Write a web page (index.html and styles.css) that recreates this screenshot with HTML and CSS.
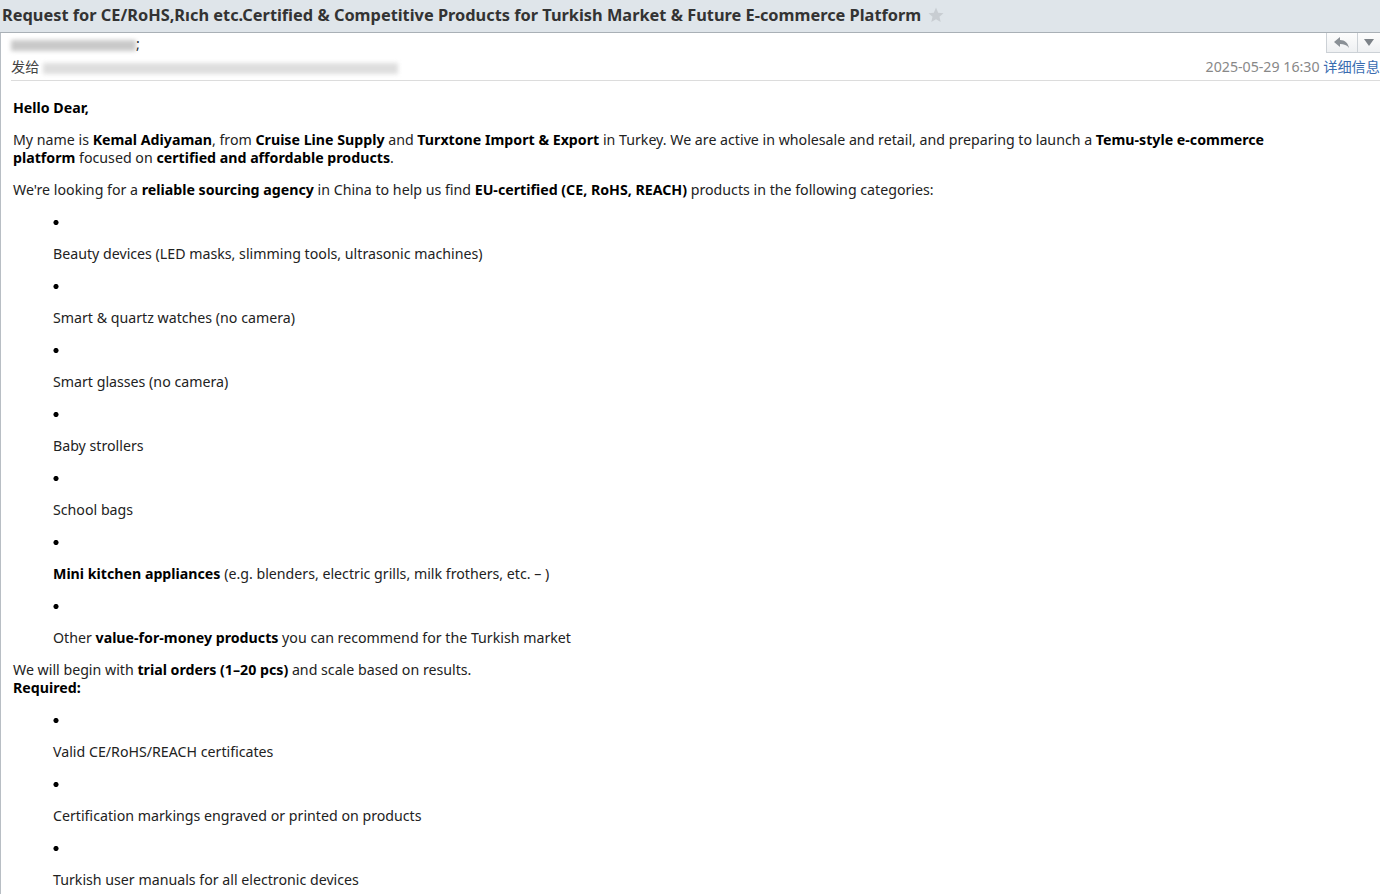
FILE: index.html
```html
<!DOCTYPE html>
<html lang="en">

<head>
    <meta charset="UTF-8">
    <title>Request for CE/RoHS</title>
    <link rel="stylesheet" href="styles.css">
</head>

<body>
    <div class="subject-bar">
        <h1 class="subject">Request for CE/RoHS,Rıch etc.Certified &amp; Competitive Products for Turkish Market &amp; Future E-commerce Platform</h1>
        <svg class="star" width="18" height="18" viewBox="0 0 24 24">
            <path d="M12 2l2.9 6.9 7.1.6-5.4 4.7 1.7 7.1L12 17.5 5.7 21.3l1.7-7.1L2 9.5l7.1-.6z" fill="#c8cdd2" />
        </svg>
    </div>

    <div class="mail">
        <div class="mail-head">
            <div class="head-row">
                <div class="sender"><span class="blur blur-from"></span>;</div>
                <div class="actions">
                    <button class="act-btn reply" title="回复">
                        <svg width="16" height="12" viewBox="0 0 16 12">
                            <path d="M6 0L0 5l6 5V7c4 0 7 1 9 4-1-5-4-8-9-8z" fill="#8a9096" />
                        </svg>
                    </button>
                    <button class="act-btn more">
                        <svg width="10" height="8" viewBox="0 0 10 8">
                            <path d="M0 0h10L5 7z" fill="#7c8288" />
                        </svg>
                    </button>
                </div>
            </div>
            <div class="head-row">
                <div class="to">发给 <span class="blur blur-to"></span></div>
                <div class="meta">2025-05-29 16:30 <a href="#" class="detail">详细信息</a></div>
            </div>
        </div>

        <div class="mail-body">
            <p><b>Hello Dear,</b></p>
            <p>My name is <b>Kemal Adiyaman</b>, from <b>Cruise Line Supply</b> and <b>Turxtone Import &amp; Export</b> in Turkey. We are active in wholesale and retail, and preparing to launch a <b>Temu-style e-commerce platform</b> focused on <b>certified and affordable products</b>.</p>
            <p>We're looking for a <b>reliable sourcing agency</b> in China to help us find <b>EU-certified (CE, RoHS, REACH)</b> products in the following categories:</p>
            <ul>
                <li><p>Beauty devices (LED masks, slimming tools, ultrasonic machines)</p></li>
                <li><p>Smart &amp; quartz watches (no camera)</p></li>
                <li><p>Smart glasses (no camera)</p></li>
                <li><p>Baby strollers</p></li>
                <li><p>School bags</p></li>
                <li><p><b>Mini kitchen appliances</b> (e.g. blenders, electric grills, milk frothers, etc. – )</p></li>
                <li><p>Other <b>value-for-money products</b> you can recommend for the Turkish market</p></li>
            </ul>
            <p>We will begin with <b>trial orders (1–20 pcs)</b> and scale based on results.<br><b>Required:</b></p>
            <ul>
                <li><p>Valid CE/RoHS/REACH certificates</p></li>
                <li><p>Certification markings engraved or printed on products</p></li>
                <li><p>Turkish user manuals for all electronic devices</p></li>
            </ul>
        </div>
    </div>
</body>

</html>
```

FILE: styles.css
```css
body {
    margin: 0;
    padding: 0;
    font-family: "Noto Sans", "Noto Sans CJK SC", sans-serif;
    font-size: 14.2px;
    color: #222;
    background-color: #fff;
    overflow: hidden;
}

.subject-bar {
    display: flex;
    align-items: center;
    gap: 6px;
    height: 32px;
    padding: 0 2px;
    background-color: #dfe5ea;
    border-bottom: 1px solid #a9b0b6;
    white-space: nowrap;
}

.subject {
    margin: 0 0 2px;
    font-size: 16.35px;
    font-weight: bold;
    color: #333;
}

.star {
    margin-top: -2px;
}

.mail {
    border-left: 1px solid #b8bec4;
    min-height: 900px;
}

.mail-head {
    margin-left: 10px;
    border-bottom: 1px solid #dcdcdc;
    padding-bottom: 3px;
}

.head-row {
    display: flex;
    justify-content: space-between;
    align-items: flex-start;
}

.sender {
    padding-top: 2px;
    line-height: 18px;
    color: #000;
}

.blur {
    display: inline-block;
    height: 11px;
    vertical-align: middle;
    background-color: #c9c9c9;
    filter: blur(2px);
}

.blur-from {
    width: 125px;
}

.blur-to {
    width: 355px;
    background-color: #dedede;
}

.to {
    padding-top: 4px;
    line-height: 20px;
    color: #444;
}

.actions {
    display: flex;
}

.act-btn {
    width: 32px;
    height: 20px;
    padding: 0;
    border: 1px solid #ccd1d6;
    border-top: none;
    background: linear-gradient(#fdfdfd, #eef0f2);
    display: flex;
    align-items: center;
    justify-content: center;
}

.act-btn.more {
    width: 22px;
    border-left: none;
    border-right: none;
}

.meta {
    padding-top: 4px;
    line-height: 20px;
    color: #888;
}

.detail {
    color: #3a6cb0;
    text-decoration: none;
}

.mail-body {
    padding: 18px 70px 10px 12px;
    line-height: 18px;
}

.mail-body p {
    margin: 0 0 14px;
}

.mail-body ul p {
    margin: 14px 0;
}

.mail-body b {
    color: #000;
}

.mail-body ul {
    margin: 0;
    padding-left: 40px;
    list-style: none;
}

.mail-body li::before {
    content: "";
    display: block;
    width: 8px;
    height: 18px;
    background: radial-gradient(circle at 3px 9.5px, #000 2.2px, transparent 2.9px) no-repeat;
}
```
